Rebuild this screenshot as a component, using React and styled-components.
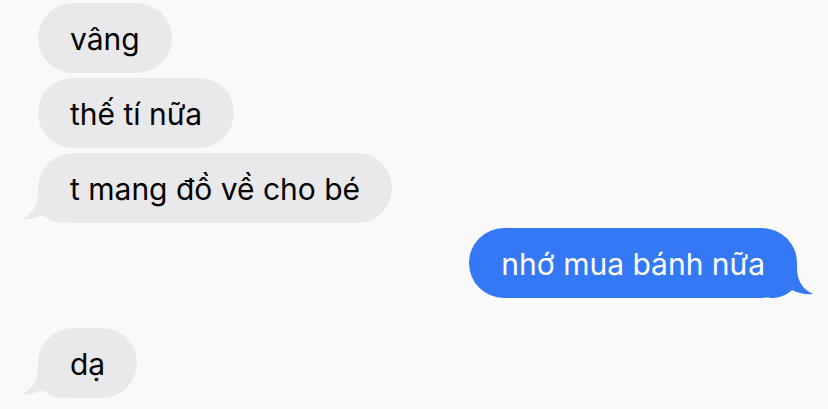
import styled, { createGlobalStyle } from "styled-components"

const GlobalStyle = createGlobalStyle`
  html, body {
    margin: 0;
    padding: 0;
    background: #f9f9f9;
  }
  body {
    font-family: Inter, "Noto Sans", sans-serif;
    -webkit-font-smoothing: antialiased;
  }
`

const Thread = styled('div')`
  display: flex;
  flex-direction: column;
  width: 828px;
  height: 409px;
  padding: 3px 31px 0 38px;
  box-sizing: border-box;
  overflow: hidden;
`

const Row = styled('div')`
  display: flex;
  justify-content: ${props => props.$mine ? 'flex-end' : 'flex-start'};
  margin-top: ${props => props.$gap}px;
`

const Bubble = styled('div')`
  position: relative;
  height: 70px;
  padding: 0 32px;
  display: flex;
  align-items: center;

  border-radius: 35px;
  background-color: ${props => props.$mine ? '#3478f6' : '#e9e9eb'};
  color: ${props => props.$mine ? '#ffffff' : '#000000'};

  font-size: 30px;
  font-weight: 400;
  white-space: nowrap;
`

const Label = styled('span')`
  position: relative;
  top: 1px;
`

const Tail = styled('svg')`
  position: absolute;
  bottom: 0;
  width: 45px;
  height: 34px;
  ${props => props.$mine
    ? 'right: -17px; transform: scaleX(-1);'
    : 'left: -17px;'}
`

function BubbleTail({ mine }) {
  return (
    <Tail $mine={mine} viewBox="0 0 45 34">
      <path
        d="M17 4 C17 18 10 26 1 30 C8 31 16 29 22 26 C26 30 32 33 40 34 L45 34 L45 0 L17 0 Z"
        fill={mine ? '#3478f6' : '#e9e9eb'}
      />
    </Tail>
  )
}

const messages = [
  { text: 'vâng', gap: 0 },
  { text: 'thế tí nữa', gap: 5 },
  { text: 't mang đồ về cho bé', gap: 5, tail: true },
  { text: 'nhớ mua bánh nữa', gap: 5, tail: true, mine: true },
  { text: 'dạ', gap: 30, tail: true },
]

function App() {
  return (
    <>
      <GlobalStyle />
      <Thread>
        {messages.map((m, i) => (
          <Row key={i} $mine={m.mine} $gap={m.gap}>
            <Bubble $mine={m.mine}>
              {m.tail && <BubbleTail mine={m.mine} />}
              <Label>{m.text}</Label>
            </Bubble>
          </Row>
        ))}
      </Thread>
    </>
  )
}

export default App
